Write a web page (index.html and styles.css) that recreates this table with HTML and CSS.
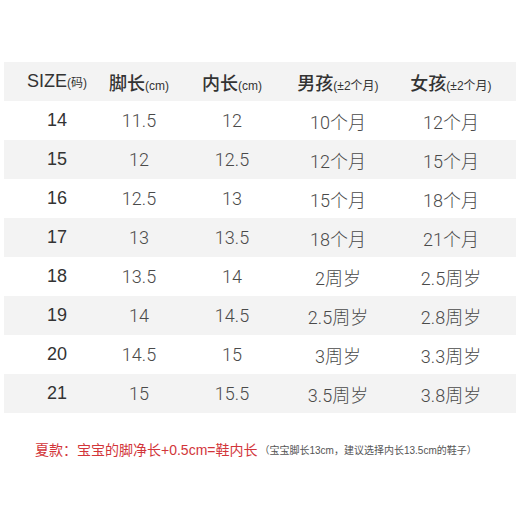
FILE: index.html
```html
<!DOCTYPE html>
<html lang="zh-CN">
<head>
<meta charset="utf-8">
<title>尺码表</title>
<link rel="stylesheet" href="styles.css">
</head>
<body>
<div class="page">
  <div class="table">
    <div class="row head">
      <div class="cell"><span class="en">SIZE</span><small>(码)</small></div>
      <div class="cell"><span class="zh">脚长</span><small>(cm)</small></div>
      <div class="cell"><span class="zh">内长</span><small>(cm)</small></div>
      <div class="cell"><span class="zh">男孩</span><small>(±2个月)</small></div>
      <div class="cell last"><span class="zh">女孩</span><small>(±2个月)</small></div>
    </div>
    <div class="row"><div class="cell size">14</div><div class="cell">11.5</div><div class="cell">12</div><div class="cell">10个月</div><div class="cell last">12个月</div></div>
    <div class="row alt"><div class="cell size">15</div><div class="cell">12</div><div class="cell">12.5</div><div class="cell">12个月</div><div class="cell last">15个月</div></div>
    <div class="row"><div class="cell size">16</div><div class="cell">12.5</div><div class="cell">13</div><div class="cell">15个月</div><div class="cell last">18个月</div></div>
    <div class="row alt"><div class="cell size">17</div><div class="cell">13</div><div class="cell">13.5</div><div class="cell">18个月</div><div class="cell last">21个月</div></div>
    <div class="row"><div class="cell size">18</div><div class="cell">13.5</div><div class="cell">14</div><div class="cell">2周岁</div><div class="cell last">2.5周岁</div></div>
    <div class="row alt"><div class="cell size">19</div><div class="cell">14</div><div class="cell">14.5</div><div class="cell">2.5周岁</div><div class="cell last">2.8周岁</div></div>
    <div class="row"><div class="cell size">20</div><div class="cell">14.5</div><div class="cell">15</div><div class="cell">3周岁</div><div class="cell last">3.3周岁</div></div>
    <div class="row alt"><div class="cell size">21</div><div class="cell">15</div><div class="cell">15.5</div><div class="cell">3.5周岁</div><div class="cell last">3.8周岁</div></div>
  </div>
  <p class="note"><span class="red">夏款：宝宝的脚净长+0.5cm=鞋内长</span><span class="gray">（宝宝脚长13cm，建议选择内长13.5cm的鞋子）</span></p>
</div>
</body>
</html>
```

FILE: styles.css
```css
html, body {
  margin: 0;
  padding: 0;
  background: #ffffff;
}
.page {
  width: 520px;
  height: 520px;
  padding-top: 62px;
  box-sizing: border-box;
  font-family: "Liberation Sans", "Noto Sans CJK SC", sans-serif;
}
.table {
  margin-left: 4px;
  width: 512px;
}
.row {
  display: grid;
  grid-template-columns: 106px 58px 128px 84px 136px;
  height: 39px;
  align-items: center;
}
.row.head,
.row.alt {
  background: #f3f3f3;
}
.cell {
  display: flex;
  justify-content: center;
  align-items: baseline;
  white-space: nowrap;
  font-size: 18px;
  color: #4a4a4a;
  font-family: Roboto, "Noto Sans CJK SC", sans-serif;
  font-weight: 300;
}
.cell.last {
  padding-left: 6px;
}
.cell.size {
  font-family: "Liberation Sans", "Noto Sans CJK SC", sans-serif;
  font-weight: 400;
  color: #333333;
}
.head .cell {
  color: #333333;
}
.head .en {
  font-family: "Liberation Sans", sans-serif;
  font-size: 18px;
  font-weight: 400;
}
.head .zh {
  font-family: "Noto Sans CJK SC", sans-serif;
  font-size: 18px;
  font-weight: 500;
}
.head small {
  font-family: "Liberation Sans", "Noto Sans CJK SC", sans-serif;
  font-size: 12px;
  font-weight: 400;
  color: #333333;
}
.note {
  margin: 26px 0 0 35px;
  height: 20px;
  display: flex;
  align-items: center;
  white-space: nowrap;
}
.red {
  color: #d2353a;
  font-size: 14px;
  font-family: "Liberation Sans", "Noto Sans CJK SC", sans-serif;
}
.gray {
  color: #555555;
  font-size: 10px;
  font-family: "Liberation Sans", "Noto Sans CJK SC", sans-serif;
  margin-left: 2px;
  padding-top: 1px;
}
```
